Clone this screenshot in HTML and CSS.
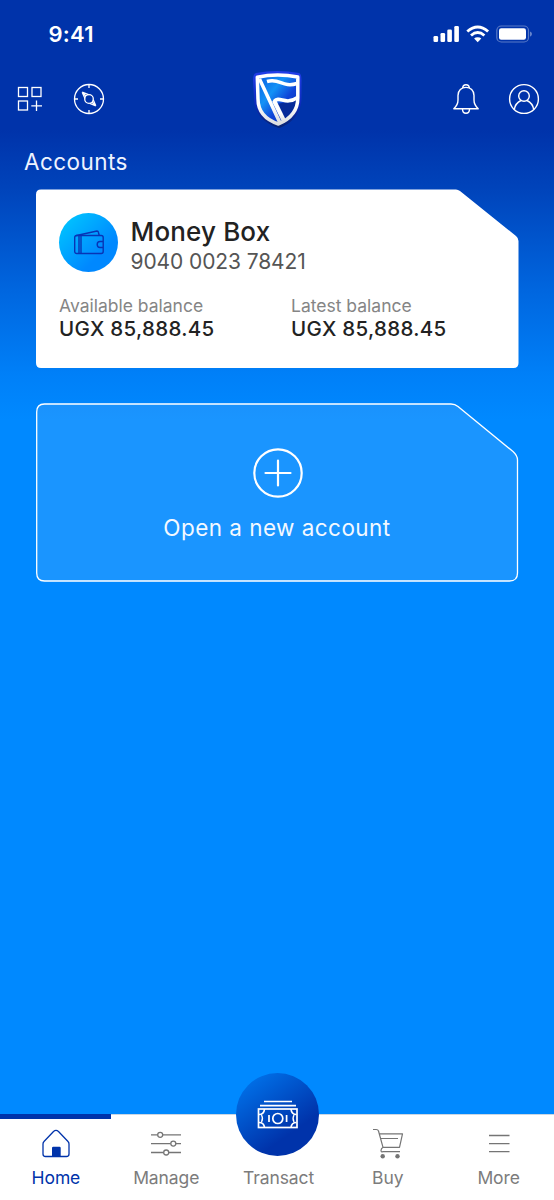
FILE: index.html
```
<!DOCTYPE html>
<html lang="en">
<head>
<meta charset="utf-8">
<meta name="viewport" content="width=device-width, initial-scale=1">
<title>Accounts</title>
<link rel="stylesheet" href="styles.css">
</head>
<body>
<div class="screen">
  <header class="status-bar">
    <span class="clock">9:41</span>
    <svg class="status-icons" width="100" height="20" viewBox="0 0 100 20">
      <g fill="#fff">
        <rect x="1.500" y="12" width="4.600" height="6" rx="1.300"/>
        <rect x="8.500" y="9" width="4.600" height="9" rx="1.300"/>
        <rect x="15.300" y="5.500" width="4.600" height="12.500" rx="1.300"/>
        <rect x="22.300" y="2" width="4.600" height="16" rx="1.300"/>
        <path d="M45.700 13.300Q48 13.300 49.300 14.600L45.700 18.300L42.100 14.600Q43.400 13.300 45.700 13.300Z"/>
      </g>
      <g fill="none" stroke="#fff" stroke-width="2.900">
        <path d="M35.300 7.500Q45.700-1.500 56.100 7.500"/>
        <path d="M39 11.500Q45.700 5.700 52.400 11.500"/>
      </g>
      <rect x="64.800" y="2" width="31.700" height="16" rx="4.500" fill="none" stroke="#fff" stroke-opacity=".35" stroke-width="1.200"/>
      <rect x="67" y="4.200" width="27" height="11.500" rx="2.200" fill="#fff"/>
      <path d="M98 7.500Q100 8.200 100 10T98 12.800Z" fill="#fff" fill-opacity=".4"/>
    </svg>
  </header>

  <div class="toolbar">
    <div class="toolbar-group toolbar-left">
      <svg width="26" height="26" viewBox="0 0 26 26" fill="none" stroke="#fff" stroke-width="1.300">
        <rect x="1.500" y="1.500" width="9" height="9"/>
        <rect x="15" y="1.500" width="9" height="9"/>
        <rect x="1.500" y="15" width="9" height="9"/>
        <path d="M19.500 14.500V25M14.300 19.800H25"/>
      </svg>
      <svg width="32" height="32" viewBox="0 0 32 32" fill="none" stroke="#fff" stroke-width="1.300">
        <circle cx="16" cy="16" r="14.500"/>
        <circle cx="16" cy="16" r="4.300"/>
        <path d="M16 1.500V5M16 27V30.500M1.500 16H5M27 16H30.500"/>
        <path d="M9.200 9.200L15.500 11.600M9.200 9.200L12 15.400M9.200 9.200L13 13M22.800 22.800L16.800 20.300M22.800 22.800L20.200 16.700M22.800 22.800L19 19"/>
      </svg>
    </div>
    <svg class="logo" width="54" height="62" viewBox="0 0 54 62">
      <defs>
        <linearGradient id="shield-fill" x1="0" y1="0" x2="1" y2="1">
          <stop offset="0" stop-color="#0759df"/><stop offset=".35" stop-color="#1492f6"/><stop offset=".6" stop-color="#1044d8"/><stop offset="1" stop-color="#0730a8"/>
        </linearGradient>
        <linearGradient id="shield-rim" x1="0" y1="0" x2="0" y2="1">
          <stop offset="0" stop-color="#223eea"/><stop offset=".6" stop-color="#0c2bbb"/><stop offset="1" stop-color="#07236f"/>
        </linearGradient>
        <linearGradient id="shield-line" x1="0" y1="0" x2="0" y2="1">
          <stop offset=".6" stop-color="#fff"/><stop offset="1" stop-color="#dcdedf"/>
        </linearGradient>
      </defs>
      <path d="M6 5Q27 1 49 5Q51.500 6 51.500 12V30C51.500 46 41 56 29 60C13 55 4 45 4 30L3 12Q3 6 6 5Z" fill="url(#shield-rim)"/>
      <path d="M8 9Q27 5 48 9V30C48 43 39 51 28.500 55.500C15 51 8.500 43 8 30Z" fill="url(#shield-fill)"/>
      <path d="M27 36L47 32C46 44 39 49 34 52Z" fill="#062a99"/>
      <g fill="none" stroke="url(#shield-line)" stroke-width="3.500" stroke-linejoin="round">
        <path d="M7.300 9.200Q27 4.800 47.800 9V30C47.800 44 39 51.500 28.500 56C15 51.500 8 43 8 31Z"/>
        <path d="M9.500 11L30 55M17 13.500C30 9.500 32 20 47 15.500M24 33.500C30 27 35 38 47.500 29.500"/>
        <path d="M24 32.500L34.500 54" stroke-width="4.200"/>
      </g>
    </svg>
    <div class="toolbar-group toolbar-right">
      <svg width="28" height="32" viewBox="0 0 28 32" fill="none" stroke="#fff" stroke-width="1.400" stroke-linejoin="round">
        <path d="M1.800 25.700Q6 22 6 17V12.500C6 7.500 9.500 4.400 14 4.400S22 7.500 22 12.500V17Q22 22 26.200 25.700Z"/>
        <path d="M10.700 5Q10.800 1.700 14 1.700T17.300 5M10.500 26Q10.500 30.300 14 30.300T17.500 26"/>
      </svg>
      <svg width="32" height="32" viewBox="0 0 32 32" fill="none" stroke="#fff" stroke-width="1.400">
        <circle cx="16" cy="16" r="14.400"/><circle cx="16" cy="13" r="5.300"/>
        <path d="M6.300 26.500C7 21.500 10.500 18.700 13 17.500M19 17.500C21.500 18.700 25 21.500 25.700 26.500"/>
      </svg>
    </div>
  </div>

  <main class="content">
    <h1 class="heading">Accounts</h1>
    <section class="account-card">
      <div class="account-top">
        <div class="account-avatar">
          <svg width="32" height="26" viewBox="0 0 32 26" fill="none" stroke="#0834b5" stroke-width="1.400" stroke-linejoin="round">
            <rect x="1.700" y="5.500" width="28.500" height="18" rx="2"/>
            <path d="M6 5.500V23.500M8 5.500V23.500M2.500 5.700L24 1Q25.200 1 25.500 2.500L26.200 5.500M30 11.500H27Q24.200 11.500 24.200 14.500T27 17.500H30"/>
          </svg>
        </div>
        <div class="account-title">
          <h2 class="account-name">Money Box</h2>
          <p class="account-number">9040 0023 78421</p>
        </div>
      </div>
      <div class="balances">
        <div><p class="balance-label">Available balance</p><p class="balance-value">UGX 85,888.45</p></div>
        <div><p class="balance-label">Latest balance</p><p class="balance-value">UGX 85,888.45</p></div>
      </div>
    </section>

    <section class="new-account">
      <svg class="new-account-outline" width="484" height="180" viewBox="0 0 484 180">
        <path d="M8.500 1H415Q419 1 422 3.500L477 48.500Q481.500 52.500 481.500 57V170Q481.500 178 473.500 178H8.500Q.7 178 .7 170V9Q.7 1 8.500 1Z" fill="#fff" fill-opacity=".1" stroke="#fff" stroke-width="1.300"/>
      </svg>
      <svg class="plus" width="52" height="52" viewBox="0 0 52 52" fill="none" stroke="#fff" stroke-width="2.200" stroke-linecap="round">
        <circle cx="26" cy="26" r="23.700"/><path d="M26 13.500V38.500M13.500 26H38.500"/>
      </svg>
      <p class="new-account-label">Open a new account</p>
    </section>
  </main>

  <nav class="tabs">
    <a class="tab tab-active">
      <svg width="32" height="32" viewBox="0 0 32 32" fill="none" stroke="#0033aa" stroke-width="1.300">
        <path d="M3 16Q3 14.500 4 13.500L13.500 3.500Q16 1.300 18.500 3.500L28 13.500Q29 14.500 29 16V26Q29 28.500 26.500 28.500H5.500Q3 28.500 3 26Z"/>
        <path d="M12 28.500V20Q12 18.800 13.200 18.800H19.500Q20.700 18.800 20.700 20V28.500Z" fill="#0033aa" stroke="none"/>
      </svg>
      <span>Home</span>
    </a>
    <a class="tab">
      <svg width="32" height="32" viewBox="0 0 32 32" fill="none" stroke="#757575" stroke-width="1.300">
        <path d="M1 6.800H7.500M13 6.800H31M1 15.600H20.500M26 15.600H31M1 24.500H13.500M19 24.500H31"/>
        <circle cx="10.200" cy="6.800" r="2.500"/><circle cx="23.300" cy="15.600" r="2.500"/><circle cx="16.200" cy="24.500" r="2.500"/>
      </svg>
      <span>Manage</span>
    </a>
    <a class="tab tab-transact">
      <div class="transact-button">
        <svg width="42" height="32" viewBox="0 0 42 32" fill="none" stroke="#fff" stroke-width="1.700">
          <path d="M7 3.500H35M3 7.600H39"/>
          <rect x="1.500" y="11" width="38.500" height="18.500"/>
          <circle cx="20.800" cy="20.500" r="5"/>
          <path d="M12 17V24M29.600 17V24M2 16.500Q7 16.500 7.500 11M34 11Q34.500 16.500 39.500 16.500M2 24.500Q7 24.500 7.500 29.500M34 29.500Q34.500 24.500 39.500 24.500"/>
          <path d="M4.500 17Q6.500 20.500 4.500 24M37 17Q35 20.500 37 24" stroke-width="1.300"/>
        </svg>
      </div>
      <span>Transact</span>
    </a>
    <a class="tab">
      <svg width="32" height="32" viewBox="0 0 32 32" fill="none" stroke="#757575" stroke-width="1.200" stroke-linejoin="round">
        <path d="M1 1.500H4.200Q6 1.500 6.500 3L11 19.300Q9 20.800 9 22.500T11 23.700H28M7.300 5.800H30.500L27.500 19.300H11M8.800 10.500H26"/>
        <g fill="#757575" stroke="none"><circle cx="10.700" cy="28.300" r="2.200"/><circle cx="25.500" cy="28.300" r="2.200"/></g>
      </svg>
      <span>Buy</span>
    </a>
    <a class="tab">
      <svg width="32" height="32" viewBox="0 0 32 32" fill="none" stroke="#757575" stroke-width="1.300">
        <path d="M6 7.500H26.500M6 15.700H26.500M6 23.700H26.500"/>
      </svg>
      <span>More</span>
    </a>
  </nav>
</div>
</body>
</html>
```
FILE: styles.css
```
* { box-sizing: border-box; }

body, h1, h2, p { margin: 0; }

body {
  font-family: Inter, "Liberation Sans", sans-serif;
}

svg { display: block; flex: none; }

.screen {
  width: 554px;
  height: 1200px;
  display: flex;
  flex-direction: column;
  overflow: hidden;
  background: linear-gradient(#0033aa 0, #0033aa 130px, #0044bb 190px, #0066df 290px, #0080f8 375px, #0089ff 420px);
}

.status-bar {
  height: 67px;
  padding: 0 22px 0 48.500px;
  display: flex;
  align-items: center;
  justify-content: space-between;
  color: #fff;
}

.clock {
  font-size: 22px;
  font-weight: 600;
  letter-spacing: .2px;
}

.toolbar {
  height: 64px;
  padding: 0 14px 0 16.500px;
  display: grid;
  grid-template-columns: 1fr 54px 1fr;
  align-items: center;
}

.toolbar-group { display: flex; align-items: center; }
.toolbar-left { gap: 30px; }
.toolbar-right { gap: 28px; justify-content: flex-end; }
.logo { justify-self: center; margin-left: -3px; }

.content {
  flex: 1;
  padding: 16px 35px 0 36px;
}

.heading {
  margin-left: -12px;
  height: 30px;
  font-size: 22.500px;
  line-height: 30px;
  font-weight: 400;
  letter-spacing: .45px;
  color: #eef3ff;
}

.account-card {
  margin-top: 12px;
  height: 179px;
  padding: 24px 24px 0 23px;
  background: #fff;
  clip-path: path("M5 0.500H420Q422 .5 424 2L480 47Q482.500 49 482.500 52V174Q482.500 179 477.500 179H5Q0 179 0 174V5.500Q0 .5 5 .5Z");
}

.account-top { display: flex; gap: 12.500px; }

.account-avatar {
  width: 59px;
  height: 59px;
  border-radius: 50%;
  display: grid;
  place-items: center;
  background: linear-gradient(135deg, #00c8ff 5%, #0088ff 70%);
}

.account-name {
  margin-top: 3px;
  font-size: 26px;
  line-height: 32px;
  font-weight: 500;
  letter-spacing: .15px;
  color: #222;
}

.account-number {
  font-size: 21px;
  line-height: 28px;
  letter-spacing: -.1px;
  color: #555;
}

.balances {
  margin-top: 19px;
  display: grid;
  grid-template-columns: 232px 1fr;
}

.balance-label {
  font-size: 17.500px;
  line-height: 22px;
  color: #858585;
}

.balance-value {
  font-size: 20.500px;
  line-height: 23px;
  font-weight: 500;
  letter-spacing: .3px;
  color: #222;
}

.new-account {
  position: relative;
  margin-top: 35px;
  height: 180px;
  padding-top: 44px;
  display: flex;
  flex-direction: column;
  align-items: center;
  color: #f2f8ff;
}

.new-account-outline {
  position: absolute;
  top: 0;
  left: 0;
}

.new-account-label {
  margin: 14px 1px 0 0;
  font-size: 22.500px;
  line-height: 30px;
  letter-spacing: .45px;
}

.tabs {
  height: 86px;
  display: grid;
  grid-template-columns: repeat(5, 1fr);
  background: #fff;
  border-top: 1px solid #c9d6e4;
}

.tab {
  position: relative;
  padding-top: 13px;
  display: flex;
  flex-direction: column;
  align-items: center;
  gap: 6px;
  font-size: 17.500px;
  line-height: 24px;
  letter-spacing: -.1px;
  color: #7c7c7c;
}

.tab-active {
  margin-top: -1px;
  padding: 14px 0 0 1px;
  color: #0033aa;
  box-shadow: inset 0 5px #0033aa;
}

.tab-transact { padding: 0 0 0 3px; gap: 10px; }

.transact-button {
  width: 83px;
  height: 83px;
  margin: -42px 1px 0 0;
  padding-bottom: 2px;
  border-radius: 50%;
  display: grid;
  place-items: center;
  background: linear-gradient(145deg, #0078f0 3%, #0033aa 70%);
}
```
